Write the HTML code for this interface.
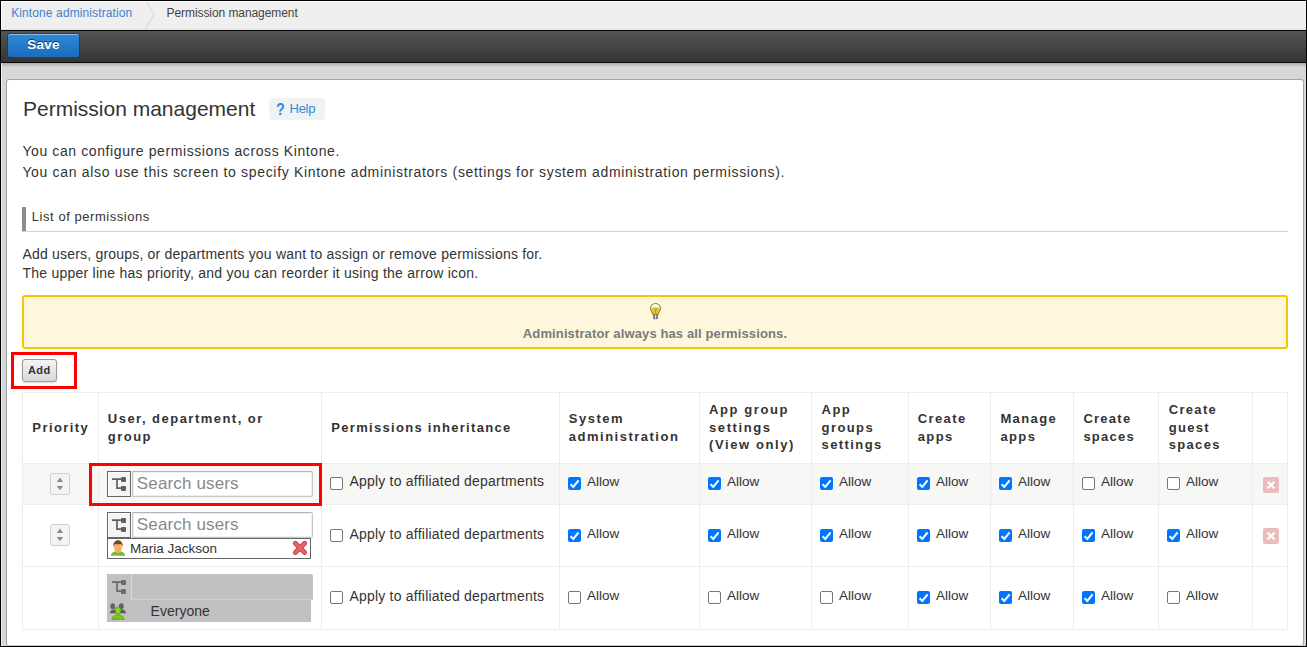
<!DOCTYPE html>
<html><head><meta charset="utf-8">
<style>
*{box-sizing:border-box;margin:0;padding:0}
html,body{width:1307px;height:647px;overflow:hidden;background:#000}
body{position:relative;font-family:"Liberation Sans",sans-serif;color:#333}
.a{position:absolute;white-space:nowrap}
#frame{position:absolute;left:1px;top:1px;width:1305px;height:645px;background:#d6d7d9;overflow:hidden}
#bc{position:absolute;left:0;top:0;width:1305px;height:29px;background:#efefef;border-top:1px solid #fff;border-left:1px solid #fff;border-bottom:1px solid #e4e4e4}
#bline{position:absolute;left:0;top:29px;width:1305px;height:1px;background:#080808}
#tb{position:absolute;left:0;top:30px;width:1305px;height:31px;background:linear-gradient(#555555,#343434)}
#tline{position:absolute;left:0;top:61px;width:1305px;height:1px;background:#0a0a0a}
#shadow{position:absolute;left:0;top:62px;width:1305px;height:4px;background:linear-gradient(rgba(0,0,0,.22),rgba(0,0,0,0))}
#lhl{position:absolute;left:0;top:62px;width:1px;height:583px;background:#eeeff0}
#panel{position:absolute;left:5px;top:78px;width:1298px;height:567px;background:#fff;border:1px solid #a4a4a4;border-bottom-color:#c8c8c8;border-radius:3px}
.save{position:absolute;left:6px;top:32px;width:73px;height:25px;border:1px solid #0b3f8a;border-radius:3px;background:linear-gradient(#2f8ad6,#1b6cbc);box-shadow:inset 0 1px 0 rgba(255,255,255,.45)}
.save span{position:absolute;left:0;width:71px;top:4px;text-align:center;font-weight:bold;font-size:13.5px;line-height:13px;letter-spacing:0.3px;color:#fff;text-shadow:0 -1px 0 #0b3060}
.help{left:269px;top:98px;width:56px;height:22px;border-radius:4px;background:#f0f2f4}
.addbtn{left:22px;top:359px;width:35px;height:23px;border:1px solid #9a9a9a;border-radius:3px;background:linear-gradient(#f4f4f4,#d9d9d9);box-shadow:0 1px 2px rgba(0,0,0,.15)}
.cb{position:absolute;width:13px;height:13px;border:1px solid #767676;border-radius:2px;background:#fff}
.cbc{position:absolute;width:13px;height:13px;border-radius:2px;background:#0075ff}
.cbc svg{position:absolute;left:0;top:0}
.vl{position:absolute;width:1px;background:#ededed}
.hl{position:absolute;height:1px;background:#ededed}
.spin{width:20px;height:22px;border:1px solid #cfcfcf;border-radius:3px;background:#f3f3f3}
.orgbtn{width:24px;height:26px;border:1px solid #666;background:#f4f4f4;box-shadow:inset 1px 1px 0 #fff}
.orgbtn svg{position:absolute;left:-1px;top:-1px}
.search{width:181px;height:26px;border:1px solid #c6c6c6;border-top-color:#b4b4b4;border-radius:0 2px 2px 0;background:#fff;box-shadow:inset 0 0 0 1px #eeeeee}

</style></head><body>
<div id="frame">
  <div id="bc"></div>
  <div id="bline"></div>
  <div id="tb"></div>
  <div id="tline"></div>
  <div id="shadow"></div>
  <div id="lhl"></div>
  <div class="save"><span>Save</span></div>
  <div id="panel"></div>
</div>
<div class="a" style="left:11.2px;top:7.04px;font-size:12px;line-height:12px;color:#3f7fd0;font-weight:normal;letter-spacing:0.11px;">Kintone administration</div>
<svg class="a" style="left:140px;top:1px" width="16" height="29"><polyline points="6.2,0 13.8,13.8 5,28.5" fill="none" stroke="#d4d4d4" stroke-width="1"/></svg>
<div class="a" style="left:166.6px;top:6.94px;font-size:12px;line-height:12px;color:#444;font-weight:normal;letter-spacing:-0.08px;">Permission management</div>
<div class="a" style="left:23px;top:97.92px;font-size:21px;line-height:21px;color:#333;font-weight:normal;letter-spacing:0px;">Permission management</div>
<div class="a help"></div>
<div class="a" style="left:276px;top:100.5px;font-size:17px;line-height:17px;font-weight:bold;color:#2b8bd6;transform:scaleX(0.85);transform-origin:0 0">?</div>
<div class="a" style="left:289.6px;top:101.90px;font-size:13px;line-height:13px;color:#2b8bd6;font-weight:normal;letter-spacing:-0.3px;">Help</div>
<div class="a" style="left:22.4px;top:144.05px;font-size:14px;line-height:14px;color:#333;font-weight:normal;letter-spacing:0.6px;">You can configure permissions across Kintone.</div>
<div class="a" style="left:22.4px;top:164.85px;font-size:14px;line-height:14px;color:#333;font-weight:normal;letter-spacing:0.673px;">You can also use this screen to specify Kintone administrators (settings for system administration permissions).</div>
<div class="a" style="left:22px;top:207px;width:4px;height:24px;background:#8c8c8c"></div>
<div class="a" style="left:22px;top:231px;width:1266px;height:1px;background:#d6d1cd"></div>
<div class="a" style="left:31.8px;top:210.10px;font-size:13px;line-height:13px;color:#333;font-weight:normal;letter-spacing:0.55px;">List of permissions</div>
<div class="a" style="left:22.4px;top:247.15px;font-size:14px;line-height:14px;color:#333;font-weight:normal;letter-spacing:0.2px;">Add users, groups, or departments you want to assign or remove permissions for.</div>
<div class="a" style="left:22.4px;top:266.15px;font-size:14px;line-height:14px;color:#333;font-weight:normal;letter-spacing:0.25px;">The upper line has priority, and you can reorder it using the arrow icon.</div>
<div class="a" style="left:22px;top:295px;width:1266px;height:54px;border:2px solid #f7c600;border-radius:3px;background:#fff7dc"></div>
<svg class="a" style="left:649px;top:302px" width="13" height="18"><defs><linearGradient id="bg1" x1="0" y1="0" x2="0" y2="1"><stop offset="0" stop-color="#ffffff"/><stop offset="0.28" stop-color="#fffbe8"/><stop offset="0.42" stop-color="#eed04a"/><stop offset="1" stop-color="#e2b82a"/></linearGradient></defs><path d="M6.5,1.5 C9.4,1.5 11.5,3.6 11.5,6.4 C11.5,8.7 9.9,9.9 9.2,12.6 L3.8,12.6 C3.1,9.9 1.5,8.7 1.5,6.4 C1.5,3.6 3.6,1.5 6.5,1.5 Z" fill="url(#bg1)" stroke="#8a7c45" stroke-width="1"/><ellipse cx="6.5" cy="7.6" rx="2.2" ry="2" fill="#d8b52a"/><path d="M6.5,8 V12.5" stroke="#c9a520" stroke-width="1"/><rect x="4.1" y="12.6" width="4.8" height="4.6" rx="1.2" fill="#707783"/><rect x="6.1" y="12.8" width="1" height="4" fill="#e6e8ec"/></svg>

<div class="a" style="left:22px;width:1266px;text-align:center;top:326.50px;font-size:13px;line-height:13px;font-weight:bold;color:#777b80;letter-spacing:0.12px">Administrator always has all permissions.</div>
<div class="a" style="left:11px;top:352px;width:66px;height:37px;border:3px solid #ff0000"></div>
<div class="a addbtn"></div>
<div class="a" style="left:28px;top:364.69px;font-size:11px;line-height:11px;color:#333;font-weight:bold;letter-spacing:0.4px;">Add</div>
<div class="a" style="left:22px;top:505px;width:1265px;height:61px;background:#fff"></div>
<div class="a" style="left:22px;top:464px;width:1265px;height:40px;background:#f7f7f5"></div>
<div class="hl" style="left:22px;top:392px;width:1266px"></div>
<div class="hl" style="left:22px;top:463px;width:1266px"></div>
<div class="hl" style="left:22px;top:504px;width:1266px"></div>
<div class="hl" style="left:22px;top:566px;width:1266px"></div>
<div class="hl" style="left:22px;top:629px;width:1266px"></div>
<div class="vl" style="left:22px;top:392px;height:238px"></div>
<div class="vl" style="left:98px;top:392px;height:238px"></div>
<div class="vl" style="left:321px;top:392px;height:238px"></div>
<div class="vl" style="left:559px;top:392px;height:238px"></div>
<div class="vl" style="left:699px;top:392px;height:238px"></div>
<div class="vl" style="left:811px;top:392px;height:238px"></div>
<div class="vl" style="left:908px;top:392px;height:238px"></div>
<div class="vl" style="left:990px;top:392px;height:238px"></div>
<div class="vl" style="left:1073px;top:392px;height:238px"></div>
<div class="vl" style="left:1158px;top:392px;height:238px"></div>
<div class="vl" style="left:1252px;top:392px;height:238px"></div>
<div class="vl" style="left:1287px;top:392px;height:238px"></div>
<div class="a" style="left:32.3px;top:420.60px;font-size:13px;line-height:13px;color:#333;font-weight:bold;letter-spacing:1.43px;">Priority</div>
<div class="a" style="left:107.8px;top:411.70px;font-size:13px;line-height:13px;color:#333;font-weight:bold;letter-spacing:1.48px;">User, department, or</div>
<div class="a" style="left:107.8px;top:429.50px;font-size:13px;line-height:13px;color:#333;font-weight:bold;letter-spacing:1.48px;">group</div>
<div class="a" style="left:331.3px;top:420.60px;font-size:13px;line-height:13px;color:#333;font-weight:bold;letter-spacing:1.3px;">Permissions inheritance</div>
<div class="a" style="left:568.8px;top:411.70px;font-size:13px;line-height:13px;color:#333;font-weight:bold;letter-spacing:1.5px;">System</div>
<div class="a" style="left:568.8px;top:429.50px;font-size:13px;line-height:13px;color:#333;font-weight:bold;letter-spacing:1.5px;">administration</div>
<div class="a" style="left:709px;top:402.80px;font-size:13px;line-height:13px;color:#333;font-weight:bold;letter-spacing:1.6px;">App group</div>
<div class="a" style="left:709px;top:420.60px;font-size:13px;line-height:13px;color:#333;font-weight:bold;letter-spacing:1.6px;">settings</div>
<div class="a" style="left:709px;top:438.40px;font-size:13px;line-height:13px;color:#333;font-weight:bold;letter-spacing:1.6px;">(View only)</div>
<div class="a" style="left:821.6px;top:402.80px;font-size:13px;line-height:13px;color:#333;font-weight:bold;letter-spacing:1.4px;">App</div>
<div class="a" style="left:821.6px;top:420.60px;font-size:13px;line-height:13px;color:#333;font-weight:bold;letter-spacing:1.4px;">groups</div>
<div class="a" style="left:821.6px;top:438.40px;font-size:13px;line-height:13px;color:#333;font-weight:bold;letter-spacing:1.4px;">settings</div>
<div class="a" style="left:917.7px;top:411.70px;font-size:13px;line-height:13px;color:#333;font-weight:bold;letter-spacing:1.4px;">Create</div>
<div class="a" style="left:917.7px;top:429.50px;font-size:13px;line-height:13px;color:#333;font-weight:bold;letter-spacing:1.4px;">apps</div>
<div class="a" style="left:1000.4px;top:411.70px;font-size:13px;line-height:13px;color:#333;font-weight:bold;letter-spacing:1.4px;">Manage</div>
<div class="a" style="left:1000.4px;top:429.50px;font-size:13px;line-height:13px;color:#333;font-weight:bold;letter-spacing:1.4px;">apps</div>
<div class="a" style="left:1083.4px;top:411.70px;font-size:13px;line-height:13px;color:#333;font-weight:bold;letter-spacing:1.25px;">Create</div>
<div class="a" style="left:1083.4px;top:429.50px;font-size:13px;line-height:13px;color:#333;font-weight:bold;letter-spacing:1.25px;">spaces</div>
<div class="a" style="left:1168.8px;top:402.80px;font-size:13px;line-height:13px;color:#333;font-weight:bold;letter-spacing:1.3px;">Create</div>
<div class="a" style="left:1168.8px;top:420.60px;font-size:13px;line-height:13px;color:#333;font-weight:bold;letter-spacing:1.3px;">guest</div>
<div class="a" style="left:1168.8px;top:438.40px;font-size:13px;line-height:13px;color:#333;font-weight:bold;letter-spacing:1.3px;">spaces</div>
<div class="cb" style="left:330px;top:477px"></div>
<div class="a" style="left:349.4px;top:474.45px;font-size:14px;line-height:14px;color:#333;font-weight:normal;letter-spacing:0.22px;">Apply to affiliated departments</div>
<div class="cbc" style="left:568px;top:477px"><svg width="13" height="13"><polyline points="2.6,7.2 5.3,9.9 10.6,3.4" fill="none" stroke="#fff" stroke-width="2"/></svg></div>
<div class="a" style="left:587px;top:474.87px;font-size:13.5px;line-height:13.5px;color:#333;font-weight:normal;letter-spacing:0px;">Allow</div>
<div class="cbc" style="left:708px;top:477px"><svg width="13" height="13"><polyline points="2.6,7.2 5.3,9.9 10.6,3.4" fill="none" stroke="#fff" stroke-width="2"/></svg></div>
<div class="a" style="left:727px;top:474.87px;font-size:13.5px;line-height:13.5px;color:#333;font-weight:normal;letter-spacing:0px;">Allow</div>
<div class="cbc" style="left:820px;top:477px"><svg width="13" height="13"><polyline points="2.6,7.2 5.3,9.9 10.6,3.4" fill="none" stroke="#fff" stroke-width="2"/></svg></div>
<div class="a" style="left:839px;top:474.87px;font-size:13.5px;line-height:13.5px;color:#333;font-weight:normal;letter-spacing:0px;">Allow</div>
<div class="cbc" style="left:917px;top:477px"><svg width="13" height="13"><polyline points="2.6,7.2 5.3,9.9 10.6,3.4" fill="none" stroke="#fff" stroke-width="2"/></svg></div>
<div class="a" style="left:936px;top:474.87px;font-size:13.5px;line-height:13.5px;color:#333;font-weight:normal;letter-spacing:0px;">Allow</div>
<div class="cbc" style="left:999px;top:477px"><svg width="13" height="13"><polyline points="2.6,7.2 5.3,9.9 10.6,3.4" fill="none" stroke="#fff" stroke-width="2"/></svg></div>
<div class="a" style="left:1018px;top:474.87px;font-size:13.5px;line-height:13.5px;color:#333;font-weight:normal;letter-spacing:0px;">Allow</div>
<div class="cb" style="left:1082px;top:477px"></div>
<div class="a" style="left:1101px;top:474.87px;font-size:13.5px;line-height:13.5px;color:#333;font-weight:normal;letter-spacing:0px;">Allow</div>
<div class="cb" style="left:1167px;top:477px"></div>
<div class="a" style="left:1186px;top:474.87px;font-size:13.5px;line-height:13.5px;color:#333;font-weight:normal;letter-spacing:0px;">Allow</div>
<div class="cb" style="left:330px;top:529px"></div>
<div class="a" style="left:349.4px;top:526.75px;font-size:14px;line-height:14px;color:#333;font-weight:normal;letter-spacing:0.22px;">Apply to affiliated departments</div>
<div class="cbc" style="left:568px;top:529px"><svg width="13" height="13"><polyline points="2.6,7.2 5.3,9.9 10.6,3.4" fill="none" stroke="#fff" stroke-width="2"/></svg></div>
<div class="a" style="left:587px;top:527.17px;font-size:13.5px;line-height:13.5px;color:#333;font-weight:normal;letter-spacing:0px;">Allow</div>
<div class="cbc" style="left:708px;top:529px"><svg width="13" height="13"><polyline points="2.6,7.2 5.3,9.9 10.6,3.4" fill="none" stroke="#fff" stroke-width="2"/></svg></div>
<div class="a" style="left:727px;top:527.17px;font-size:13.5px;line-height:13.5px;color:#333;font-weight:normal;letter-spacing:0px;">Allow</div>
<div class="cbc" style="left:820px;top:529px"><svg width="13" height="13"><polyline points="2.6,7.2 5.3,9.9 10.6,3.4" fill="none" stroke="#fff" stroke-width="2"/></svg></div>
<div class="a" style="left:839px;top:527.17px;font-size:13.5px;line-height:13.5px;color:#333;font-weight:normal;letter-spacing:0px;">Allow</div>
<div class="cbc" style="left:917px;top:529px"><svg width="13" height="13"><polyline points="2.6,7.2 5.3,9.9 10.6,3.4" fill="none" stroke="#fff" stroke-width="2"/></svg></div>
<div class="a" style="left:936px;top:527.17px;font-size:13.5px;line-height:13.5px;color:#333;font-weight:normal;letter-spacing:0px;">Allow</div>
<div class="cbc" style="left:999px;top:529px"><svg width="13" height="13"><polyline points="2.6,7.2 5.3,9.9 10.6,3.4" fill="none" stroke="#fff" stroke-width="2"/></svg></div>
<div class="a" style="left:1018px;top:527.17px;font-size:13.5px;line-height:13.5px;color:#333;font-weight:normal;letter-spacing:0px;">Allow</div>
<div class="cbc" style="left:1082px;top:529px"><svg width="13" height="13"><polyline points="2.6,7.2 5.3,9.9 10.6,3.4" fill="none" stroke="#fff" stroke-width="2"/></svg></div>
<div class="a" style="left:1101px;top:527.17px;font-size:13.5px;line-height:13.5px;color:#333;font-weight:normal;letter-spacing:0px;">Allow</div>
<div class="cbc" style="left:1167px;top:529px"><svg width="13" height="13"><polyline points="2.6,7.2 5.3,9.9 10.6,3.4" fill="none" stroke="#fff" stroke-width="2"/></svg></div>
<div class="a" style="left:1186px;top:527.17px;font-size:13.5px;line-height:13.5px;color:#333;font-weight:normal;letter-spacing:0px;">Allow</div>
<div class="cb" style="left:330px;top:591px"></div>
<div class="a" style="left:349.4px;top:588.75px;font-size:14px;line-height:14px;color:#333;font-weight:normal;letter-spacing:0.22px;">Apply to affiliated departments</div>
<div class="cb" style="left:568px;top:591px"></div>
<div class="a" style="left:587px;top:589.17px;font-size:13.5px;line-height:13.5px;color:#333;font-weight:normal;letter-spacing:0px;">Allow</div>
<div class="cb" style="left:708px;top:591px"></div>
<div class="a" style="left:727px;top:589.17px;font-size:13.5px;line-height:13.5px;color:#333;font-weight:normal;letter-spacing:0px;">Allow</div>
<div class="cb" style="left:820px;top:591px"></div>
<div class="a" style="left:839px;top:589.17px;font-size:13.5px;line-height:13.5px;color:#333;font-weight:normal;letter-spacing:0px;">Allow</div>
<div class="cbc" style="left:917px;top:591px"><svg width="13" height="13"><polyline points="2.6,7.2 5.3,9.9 10.6,3.4" fill="none" stroke="#fff" stroke-width="2"/></svg></div>
<div class="a" style="left:936px;top:589.17px;font-size:13.5px;line-height:13.5px;color:#333;font-weight:normal;letter-spacing:0px;">Allow</div>
<div class="cbc" style="left:999px;top:591px"><svg width="13" height="13"><polyline points="2.6,7.2 5.3,9.9 10.6,3.4" fill="none" stroke="#fff" stroke-width="2"/></svg></div>
<div class="a" style="left:1018px;top:589.17px;font-size:13.5px;line-height:13.5px;color:#333;font-weight:normal;letter-spacing:0px;">Allow</div>
<div class="cbc" style="left:1082px;top:591px"><svg width="13" height="13"><polyline points="2.6,7.2 5.3,9.9 10.6,3.4" fill="none" stroke="#fff" stroke-width="2"/></svg></div>
<div class="a" style="left:1101px;top:589.17px;font-size:13.5px;line-height:13.5px;color:#333;font-weight:normal;letter-spacing:0px;">Allow</div>
<div class="cb" style="left:1167px;top:591px"></div>
<div class="a" style="left:1186px;top:589.17px;font-size:13.5px;line-height:13.5px;color:#333;font-weight:normal;letter-spacing:0px;">Allow</div>
<div class="a spin" style="left:50px;top:473px"><svg width="20" height="22" style="position:absolute;left:-1px;top:-1px"><polygon points="9.9,4.4 6.8,8.9 13.1,8.9" fill="#8a8a8a"/><polygon points="6.8,13 13.1,13 9.9,17.3" fill="#8a8a8a"/></svg></div>
<div class="a spin" style="left:50px;top:524px"><svg width="20" height="22" style="position:absolute;left:-1px;top:-1px"><polygon points="9.9,4.4 6.8,8.9 13.1,8.9" fill="#8a8a8a"/><polygon points="6.8,13 13.1,13 9.9,17.3" fill="#8a8a8a"/></svg></div>
<div class="a orgbtn" style="left:107px;top:471px"><svg width="24" height="26" style="position:absolute;left:-1px;top:-1px"><path d="M5,8.2 H15 M10,8.2 V17.2 H15" fill="none" stroke="#5e5e5e" stroke-width="1.7"/><rect x="14" y="6" width="5" height="5" rx="1" fill="#606060"/><rect x="14" y="15" width="5" height="5" rx="1" fill="#606060"/></svg>
</div>
<div class="a search" style="left:132px;top:471px"></div>
<div class="a" style="left:136.8px;top:475.01px;font-size:17px;line-height:17px;color:#888;font-weight:normal;letter-spacing:0.15px;">Search users</div>
<div class="a orgbtn" style="left:107px;top:512px"><svg width="24" height="26" style="position:absolute;left:-1px;top:-1px"><path d="M5,8.2 H15 M10,8.2 V17.2 H15" fill="none" stroke="#5e5e5e" stroke-width="1.7"/><rect x="14" y="6" width="5" height="5" rx="1" fill="#606060"/><rect x="14" y="15" width="5" height="5" rx="1" fill="#606060"/></svg>
</div>
<div class="a search" style="left:132px;top:512px"></div>
<div class="a" style="left:136.8px;top:516.01px;font-size:17px;line-height:17px;color:#888;font-weight:normal;letter-spacing:0.15px;">Search users</div>
<div class="a" style="left:107px;top:538px;width:204px;height:21px;border:1px solid #666;background:#fff"></div>
<svg class="a" style="left:110px;top:540px" width="16" height="17"><path d="M0.9,15.8 C0.9,13.2 2.8,12 5.6,11.3 L8,13.6 L10.4,11.3 C13.2,12 15.1,13.2 15.1,15.8 Z" fill="#6fc22e"/><path d="M5.6,11.3 L8,13.6 L10.4,11.3" fill="none" stroke="#4a9a20" stroke-width="0.7"/><path d="M6.4,10 L9.6,10 L9.6,12.6 L8,13.4 L6.4,12.6 Z" fill="#f7a75c"/><ellipse cx="8" cy="7.6" rx="4" ry="4.9" fill="#f9ad66"/><path d="M3.3,7 C2.9,2.4 5.3,0.2 8,0.2 C10.7,0.2 13.1,2.4 12.7,7 C12.2,5.2 11.4,4.1 10.2,3.9 C8.8,4.4 7,4.3 5.6,3.9 C4.4,4.3 3.7,5.4 3.3,7 Z" fill="#6e4a1c"/></svg>

<div class="a" style="left:130px;top:541.77px;font-size:13.5px;line-height:13.5px;color:#333;font-weight:normal;letter-spacing:0px;">Maria Jackson</div>
<svg class="a" style="left:290px;top:538px" width="20" height="20"><path d="M5.3,5.2 L14.7,14.5 M14.7,5.2 L5.3,14.5" stroke="#cf3f44" stroke-width="4.8" stroke-linecap="round"/><path d="M5.3,5.2 L14.7,14.5 M14.7,5.2 L5.3,14.5" stroke="#e4686b" stroke-width="2.8" stroke-linecap="round"/></svg>

<div class="a" style="left:107px;top:574px;width:206px;height:26px;background:#c1c1c1;border-radius:0 2px 0 0"></div>
<div class="a" style="left:107px;top:600px;width:204px;height:22px;background:#c1c1c1"></div>
<div class="a" style="left:131px;top:574px;width:1px;height:26px;background:#d8d8d8"></div>
<div class="a" style="left:131px;top:599px;width:181px;height:1px;background:#d0d0d0"></div>
<div class="a" style="left:108px;top:575px"><svg width="24" height="26" style="position:absolute;left:-1px;top:-1px"><path d="M5,8.2 H15 M10,8.2 V17.2 H15" fill="none" stroke="#6a6a6a" stroke-width="1.7"/><rect x="14" y="6" width="5" height="5" rx="1" fill="#6c6c6c"/><rect x="14" y="15" width="5" height="5" rx="1" fill="#6c6c6c"/></svg>
</div>
<svg class="a" style="left:109px;top:603px" width="18" height="17"><ellipse cx="3.7" cy="3.2" rx="2.4" ry="2.9" fill="#626262"/><ellipse cx="12.3" cy="3.2" rx="2.4" ry="2.9" fill="#626262"/><path d="M1,10.2 C1,7.8 2.6,6.6 5,6.4 L13,6.4 C15.4,6.6 17,7.8 17,10.2 Z" fill="#5a5a5a"/><path d="M3,16.3 C3,13.6 5.4,12.3 9,12.3 C12.6,12.3 15,13.6 15,16.3 Z" fill="#80c818" stroke="#3c9620" stroke-width="0.7"/><path d="M7.6,10 L10.4,10 L10.6,12.8 L7.4,12.8 Z" fill="#80c818"/><ellipse cx="9" cy="7.6" rx="2.9" ry="3.7" fill="#8ad21c" stroke="#3c9620" stroke-width="0.7"/></svg>

<div class="a" style="left:150.6px;top:603.95px;font-size:14px;line-height:14px;color:#333;font-weight:normal;letter-spacing:0px;">Everyone</div>
<div class="a" style="left:1263px;top:477px;width:16px;height:16px;border-radius:2px;background:#ebbcbd"><svg width="16" height="16"><path d="M4.7,4.7 L11.3,11.3 M11.3,4.7 L4.7,11.3" stroke="#fff" stroke-width="2.2"/></svg></div>
<div class="a" style="left:1263px;top:528px;width:16px;height:16px;border-radius:2px;background:#ebbcbd"><svg width="16" height="16"><path d="M4.7,4.7 L11.3,11.3 M11.3,4.7 L4.7,11.3" stroke="#fff" stroke-width="2.2"/></svg></div>
<div class="a" style="left:89px;top:463px;width:233px;height:43px;border:3px solid #ff0000"></div>
</body></html>
